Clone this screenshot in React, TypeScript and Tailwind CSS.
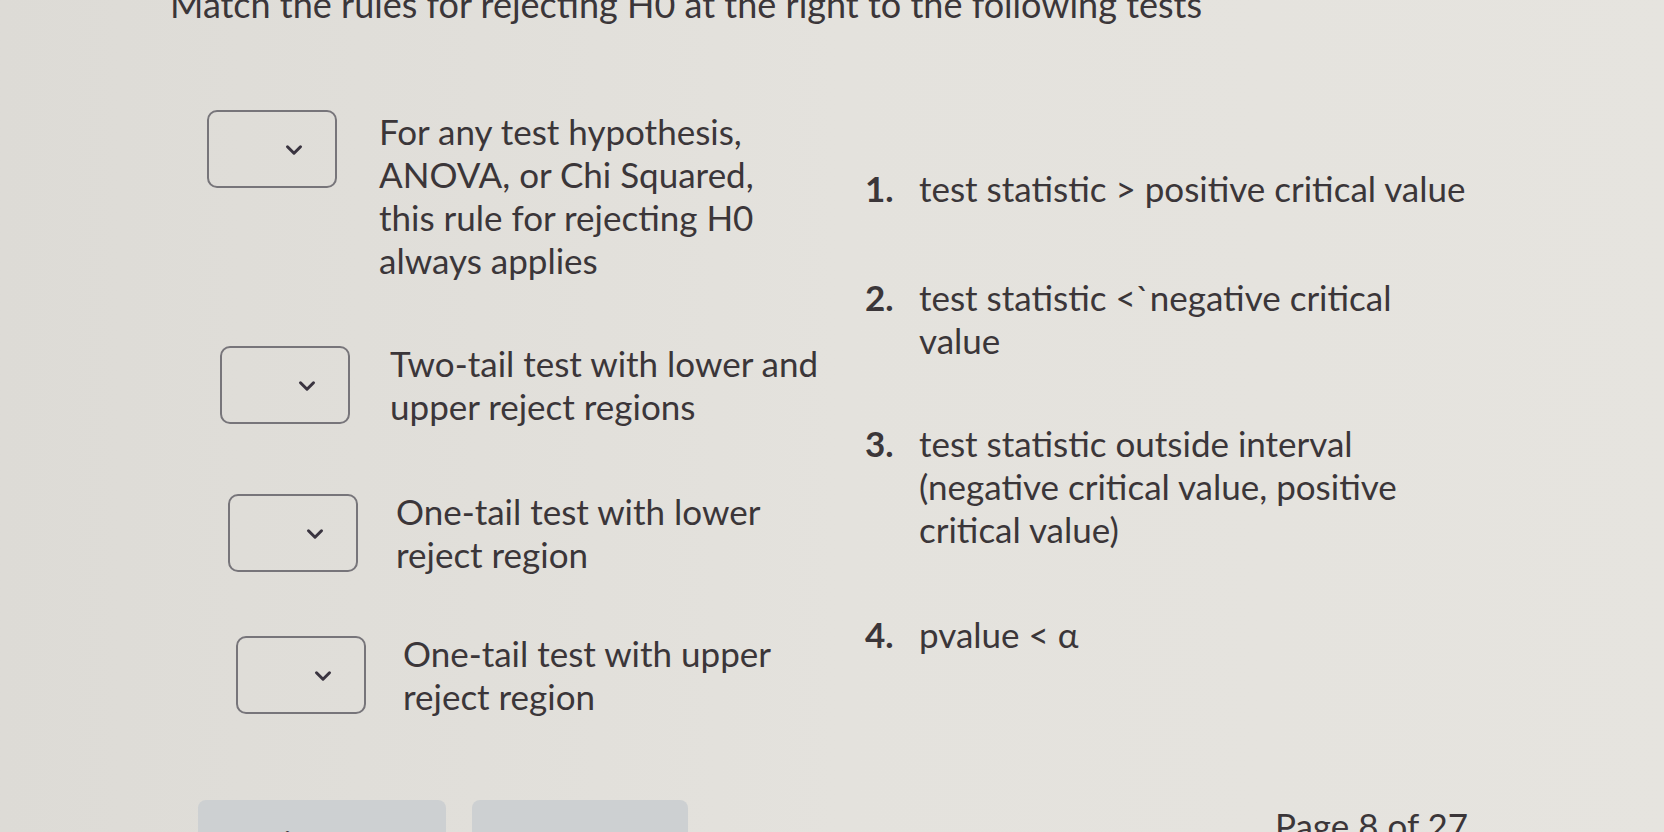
import { ChevronDown } from 'lucide-react';

// rows on the left: select box + test description
const tests = [
  { lines: ['For any test hypothesis,', 'ANOVA, or Chi Squared,', 'this rule for rejecting H0', 'always applies'], row: 'mt-0 ml-[37px] items-start', gap: 'gap-[42px]' },
  { lines: ['Two-tail test with lower and', 'upper reject regions'], row: 'mt-[60px] ml-[50px] items-center', gap: 'gap-[40px]' },
  { lines: ['One-tail test with lower', 'reject region'], row: 'mt-[62px] ml-[58px] items-center', gap: 'gap-[38px]' },
  { lines: ['One-tail test with upper', 'reject region'], row: 'mt-[56px] ml-[66px] items-center', gap: 'gap-[37px]' },
];

const rules = [
  { n: '1.', lines: ['test statistic > positive critical value'], mt: 'mt-[57px]' },
  { n: '2.', lines: ['test statistic <\u02CBnegative critical', 'value'], mt: 'mt-[66px]' },
  { n: '3.', lines: ['test statistic outside interval', '(negative critical value, positive', 'critical value)'], mt: 'mt-[60px]' },
  { n: '4.', lines: ['pvalue < \u03B1'], mt: 'mt-[62px]' },
];

function SelectBox() {
  return (
    <div className="w-[130px] h-[78px] shrink-0 rounded-[10px] border-2 border-[#77757a] flex items-center justify-end pr-[28px]">
      <ChevronDown size={26} strokeWidth={2.8} className="text-[#3a3440] mt-[2px]" />
    </div>
  );
}

export default function App() {
  return (
    <div
      className="w-[1664px] h-[832px] overflow-hidden bg-gradient-to-r from-[#dddbd6] via-[#e4e2dd] to-[#e6e4df] text-[#3b3639] text-[35px] leading-[43px] pl-[170px]"
      style={{ fontFamily: 'Lato, "Open Sans", sans-serif' }}
    >
      <h1 className="-mt-[17px] text-[36px] whitespace-nowrap font-normal">
        Match the rules for rejecting H0 at the right to the following tests
      </h1>

      <div className="flex mt-[84px]">
        {/* tests with dropdowns */}
        <div className="w-[695px] flex flex-col">
          {tests.map((t, i) => (
            <div key={i} className={`flex ${t.row} ${t.gap}`}>
              <SelectBox />
              <div className="whitespace-nowrap">
                {t.lines.map((l) => (
                  <div key={l}>{l}</div>
                ))}
              </div>
            </div>
          ))}
        </div>

        {/* numbered rules */}
        <ol className="flex flex-col">
          {rules.map((r) => (
            <li key={r.n} className={`flex ${r.mt}`}>
              <span className="w-[54px] font-bold">{r.n}</span>
              <div className="whitespace-nowrap">
                {r.lines.map((l) => (
                  <div key={l}>{l}</div>
                ))}
              </div>
            </li>
          ))}
        </ol>
      </div>

      <div className="flex items-start mt-[82px] ml-[28px]">
        <button className="w-[248px] h-[64px] rounded-lg bg-[#cdd0d2] pt-[22px] text-center leading-[42px] whitespace-nowrap">
          Previous Page
        </button>
        <button className="w-[216px] h-[64px] ml-[26px] rounded-lg bg-[#cdd0d2] pt-[22px] text-center leading-[42px] whitespace-nowrap">
          Next Page
        </button>
        <div className="ml-[587px] mt-[4px] whitespace-nowrap">Page 8 of 27</div>
      </div>
    </div>
  );
}
